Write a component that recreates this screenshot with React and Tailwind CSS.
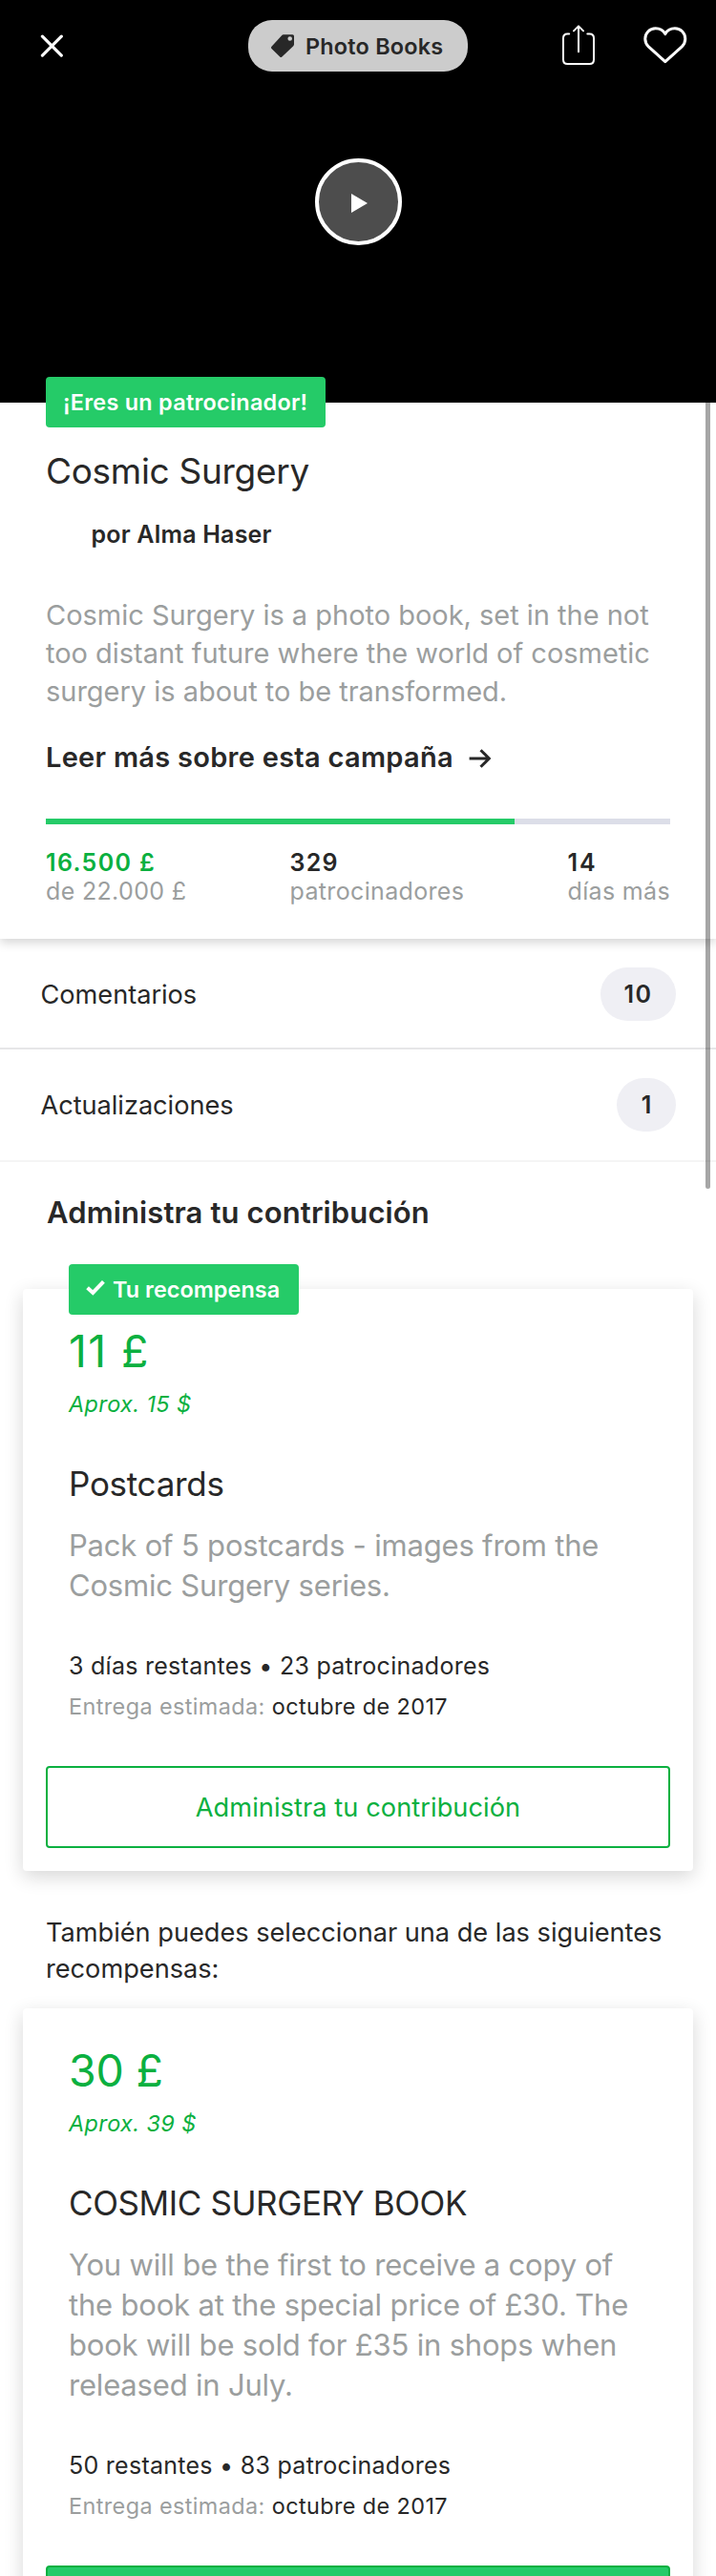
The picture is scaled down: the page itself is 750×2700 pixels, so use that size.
import React from "react";

function CloseIcon() {
  return (
    <svg className="h-6 w-6" viewBox="0 0 24 24" fill="none" stroke="#fff" strokeWidth="3.2" strokeLinecap="round">
      <path d="M2.4 2.2 22.3 22.1M22.3 2.2 2.4 22.1" />
    </svg>
  );
}

function TagIcon() {
  return (
    <svg className="h-6 w-6" viewBox="0 0 24 24" fill="#282828">
      <path
        fillRule="evenodd"
        d="M12.8.2H22.4Q24 .2 24 1.8V10.6Q24 11.5 23.3 12.2L11.4 23.5Q10.3 24.5 9.2 23.5L.5 15Q-.5 13.9.5 12.8L11.3.9Q12 .2 12.8.2ZM19.7 2.2a2.3 2.3 0 1 0 0 4.6a2.3 2.3 0 1 0 0-4.6Z"
      />
    </svg>
  );
}

function ShareIcon() {
  return (
    <svg className="h-11 w-9" viewBox="0 0 36 44" fill="none" stroke="#fff" strokeWidth="2" strokeLinecap="round" strokeLinejoin="round">
      <path d="M8.2 10.5H6.5Q2 10.5 2 15V37.5Q2 42 6.5 42H29.5Q34 42 34 37.5V15Q34 10.5 29.5 10.5H27.3" />
      <path d="M18 29.2V2.6M13 7.4 18 2.4 23 7.4" />
    </svg>
  );
}

function HeartIcon() {
  return (
    <svg className="h-10 w-12" viewBox="0 0 48 40" fill="none" stroke="#fff" strokeWidth="3" strokeLinejoin="round">
      <path d="M23.8 8.6C21.8 4.9 18 2.8 13.7 2.8C7.4 2.8 2.8 7.8 2.8 13.7C2.8 17.2 4.2 19.8 6.6 22.2L23.8 37.6L41 22.2C43.4 19.8 44.8 17.2 44.8 13.7C44.8 7.8 40.2 2.8 33.9 2.8C29.6 2.8 25.8 4.9 23.8 8.6Z" />
    </svg>
  );
}

function Header() {
  return (
    <header className="h-[422px] bg-black pt-[21px]">
      <div className="flex h-[54px] items-center pl-[42px]">
        <CloseIcon />
        <div className="ml-[194px] flex h-[54px] w-[230px] items-center rounded-[25px] bg-[#cccccc] pl-6">
          <TagIcon />
          <span className="ml-3 pt-[2px] text-[23.4px] leading-[30px] font-semibold tracking-[0.23px] whitespace-nowrap">Photo Books</span>
        </div>
        <div className="ml-[98px] mb-[2px]">
          <ShareIcon />
        </div>
        <div className="ml-[49px] mb-[2px]">
          <HeartIcon />
        </div>
      </div>
      <div className="mx-auto mt-[91px] flex h-[91px] w-[91px] items-center justify-center rounded-full border-4 border-white bg-[#4d4d4d]">
        <svg className="mt-[3px] ml-[2px] h-5 w-[17px]" viewBox="0 0 17 20" fill="#fff">
          <path d="M0 0 17 10 0 20Z" />
        </svg>
      </div>
    </header>
  );
}

function Stat({ value, label, valueClass }) {
  return (
    <div className="text-[25px] leading-[30px]">
      <div className={`font-semibold ${valueClass}`}>{value}</div>
      <div className="tracking-[0.34px] text-[#9b9e9e]">{label}</div>
    </div>
  );
}

function Campaign() {
  return (
    <section className="relative h-[562px] bg-white px-12 shadow-[0_4px_10px_rgba(0,0,0,0.17)]">
      <div className="relative -top-[27px] -mb-[27px] h-[53px] w-[293px] rounded bg-[#25cb68] pl-[18px] text-[23.4px] leading-[53px] font-semibold tracking-[0.28px] whitespace-nowrap text-white">
        ¡Eres un patrocinador!
      </div>
      <h1 className="mt-[22px] text-[37px] leading-[48px] tracking-[-0.3px]">Cosmic Surgery</h1>
      <div className="mt-[26px] ml-[47.5px] text-[25px] leading-8 font-semibold tracking-[0.2px]">por Alma Haser</div>
      <p className="mt-[49px] text-[29px] leading-10 tracking-[-0.02px] whitespace-nowrap text-[#9b9e9e]">
        Cosmic Surgery is a photo book, set in the not
        <br />
        too distant future where the world of cosmetic
        <br />
        surgery is about to be transformed.
      </p>
      <div className="mt-[29px] flex h-10 items-center text-[29px] leading-10 font-semibold tracking-[0.28px]">
        Leer más sobre esta campaña
        <svg className="mt-[3px] ml-4 h-6 w-6" viewBox="0 0 24 24" fill="none" stroke="#282828" strokeWidth="3">
          <path d="M.6 11H21M12.5 2.2 21.3 11 12.5 19.8" />
        </svg>
      </div>
      <div className="mt-11 h-1.5 bg-[#dcdee8]">
        <div className="h-full w-3/4 bg-[#25cb68]" />
      </div>
      <div className="mt-[25px] flex justify-between">
        <Stat value="16.500 £" label="de 22.000 £" valueClass="text-[#0bb040] tracking-[1.35px]" />
        <Stat value="329" label="patrocinadores" valueClass="tracking-[1.2px]" />
        <Stat value="14" label="días más" valueClass="tracking-[1.8px]" />
      </div>
    </section>
  );
}

function LinkRow({ label, count, rowClass, pillClass }) {
  return (
    <div className={`flex items-center justify-between border-b-2 pr-[42px] pl-[42.5px] ${rowClass}`}>
      <span className="pt-[2px] text-[27.2px] leading-9 tracking-[-0.04px]">{label}</span>
      <span className={`flex h-14 items-center justify-center rounded-full bg-[#efeff4] text-[25px] leading-[30px] font-semibold ${pillClass}`}>{count}</span>
    </div>
  );
}

function Reward({ badge, price, approx, title, titleClass, priceClass, lines, availability, action, buttonClass, className }) {
  return (
    <article className={`relative mx-6 rounded bg-white px-6 pt-[37px] pb-6 shadow-[0_6px_20px_rgba(0,0,0,0.16)] ${className}`}>
      {badge && (
        <div className="absolute -top-[26px] left-12 flex h-[53px] w-[241px] items-center rounded bg-[#25cb68] pl-[18px] text-white">
          <svg className="mb-[3px] h-4 w-5" viewBox="0 0 20 16" fill="none" stroke="#fff" strokeWidth="4">
            <path d="M1.6 7.8 7.3 13 18.4 1.4" />
          </svg>
          <span className="ml-2 text-[23.4px] leading-[30px] font-semibold tracking-[0.05px] whitespace-nowrap">{badge}</span>
        </div>
      )}
      <div className="px-6">
        <div className={`text-[46.5px] leading-[56px] text-[#0bb040] ${priceClass}`}>{price}</div>
        <div className="mt-[13px] text-[23.4px] leading-[30px] tracking-[0.42px] text-[#0bb040] italic">{approx}</div>
        <h3 className={`mt-[46px] text-[35px] leading-[44px] whitespace-nowrap ${titleClass}`}>{title}</h3>
        <p className="mt-[22px] text-[31px] leading-[42px] tracking-[-0.19px] whitespace-nowrap text-[#9b9e9e]">
          {lines.map((line) => (
            <span key={line} className="block">{line}</span>
          ))}
        </p>
        <div className="mt-[47px] text-[25px] leading-8 tracking-[0.27px]">{availability}</div>
        <div className="mt-3 text-[23.4px] leading-[30px] tracking-[0.41px]">
          <span className="text-[#9b9e9e]">Entrega estimada:</span> octubre de 2017
        </div>
      </div>
      <div className={`mt-[47px] flex h-[86px] items-center justify-center rounded border-2 border-[#0bb040] pt-[2px] text-[27.2px] leading-9 tracking-[0.07px] text-[#0bb040] ${buttonClass}`}>
        {action}
      </div>
    </article>
  );
}

export default function App() {
  return (
    <div className="relative h-[2700px] w-[750px] overflow-hidden bg-white font-['Inter',sans-serif] text-[#282828]">
      <Header />
      <Campaign />
      <LinkRow label="Comentarios" count="10" rowClass="h-[116px] pt-[2px] border-[#e6e6e8]" pillClass="w-[79px] tracking-[1.5px]" />
      <LinkRow label="Actualizaciones" count="1" rowClass="h-[118px] border-[#f5f5f5]" pillClass="w-[62px]" />
      <h2 className="mt-[33px] pl-[49px] text-[31px] leading-10 font-semibold tracking-[0.12px]">Administra tu contribución</h2>
      <Reward
        className="mt-[60px]"
        badge="Tu recompensa"
        price="11 £"
        priceClass="tracking-[1.4px]"
        approx="Aprox. 15 $"
        title="Postcards"
        titleClass="tracking-[-0.28px]"
        lines={["Pack of 5 postcards - images from the", "Cosmic Surgery series."]}
        availability="3 días restantes • 23 patrocinadores"
        action="Administra tu contribución"
        buttonClass="bg-white"
      />
      <p className="mt-[46px] pl-12 text-[27.2px] leading-[38px] tracking-[-0.02px] whitespace-nowrap">
        También puedes seleccionar una de las siguientes
        <br />
        recompensas:
      </p>
      <Reward
        className="mt-[22px]"
        price="30 £"
        priceClass="tracking-[-0.25px]"
        approx="Aprox. 39 $"
        title="COSMIC SURGERY BOOK"
        titleClass="tracking-[-0.4px]"
        lines={[
          "You will be the first to receive a copy of",
          "the book at the special price of £30. The",
          "book will be sold for £35 in shops when",
          "released in July.",
        ]}
        availability="50 restantes • 83 patrocinadores"
        buttonClass="bg-[#25cb68]"
      />
      <div className="absolute top-[422px] left-[739px] h-[824px] w-[5px] rounded-b-full bg-black/35" />
    </div>
  );
}
